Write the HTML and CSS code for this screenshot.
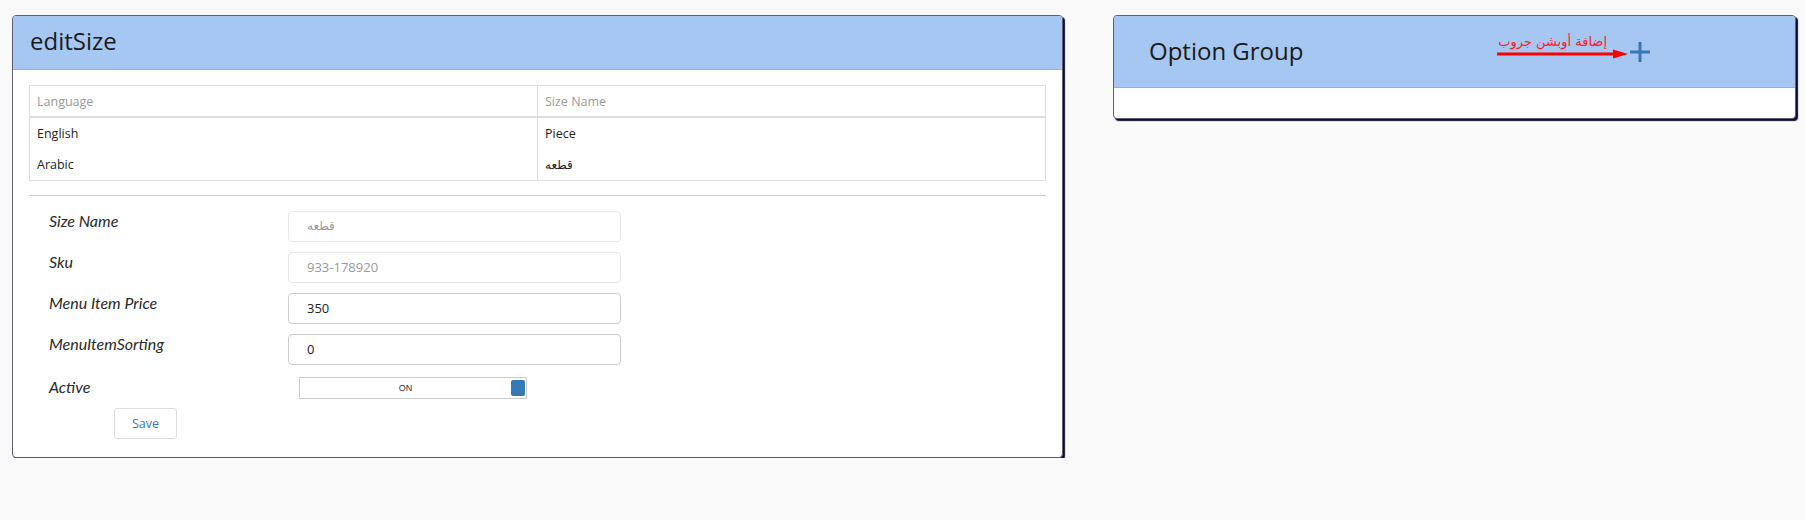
FILE: index.html
```html
<!DOCTYPE html>
<html lang="en">
<head>
<meta charset="utf-8">
<title>editSize</title>
<link rel="stylesheet" href="styles.css">
</head>
<body>
<div class="page">
  <div class="card card-left">
    <div class="card-head head-left"><h2 class="title-left">editSize</h2></div>
    <div class="card-body">
      <table class="lang-table">
        <thead>
          <tr><th class="col-a">Language</th><th class="col-b">Size Name</th></tr>
        </thead>
        <tbody>
          <tr><td class="col-a">English</td><td class="col-b">Piece</td></tr>
          <tr><td class="col-a">Arabic</td><td class="col-b ar">قطعه</td></tr>
        </tbody>
      </table>
      <hr class="divider">
      <div class="form">
        <div class="form-row">
          <label class="lbl">Size Name</label>
          <div class="field disabled ar">قطعه</div>
        </div>
        <div class="form-row">
          <label class="lbl">Sku</label>
          <div class="field disabled">933-178920</div>
        </div>
        <div class="form-row">
          <label class="lbl">Menu Item Price</label>
          <div class="field">350</div>
        </div>
        <div class="form-row">
          <label class="lbl">MenuItemSorting</label>
          <div class="field">0</div>
        </div>
        <div class="form-row row-toggle">
          <label class="lbl">Active</label>
          <div class="toggle"><span class="toggle-text">ON</span><span class="toggle-handle"></span></div>
        </div>
        <div class="actions"><button class="btn-save">Save</button></div>
      </div>
    </div>
  </div>

  <div class="card card-right">
    <div class="card-head head-right">
      <h2 class="title-right">Option Group</h2>
      <div class="add-wrap">
        <div class="annot">
          <span class="annot-text">إضافة أوبشن جروب</span>
          <svg class="annot-arrow" width="131" height="10" viewBox="0 0 131 10"><rect x="0" y="3.5" width="118" height="3" fill="#ff0000"/><polygon points="116,0.5 131,5 116,9.5" fill="#ff0000"/></svg>
        </div>
        <svg class="plus" width="20" height="20" viewBox="0 0 20 20"><rect x="8.5" y="0" width="3" height="20" fill="#337ab7"/><rect x="0" y="8.5" width="20" height="3" fill="#337ab7"/></svg>
      </div>
    </div>
    <div class="card-body-empty"></div>
  </div>
</div>
</body>
</html>
```

FILE: styles.css
```css
html, body {
  margin: 0;
  padding: 0;
  background: #f9f9f9;
  font-family: "Open Sans", "DejaVu Sans", sans-serif;
  color: #333;
}

.page {
  display: flex;
  align-items: flex-start;
  gap: 50px;
  padding: 15px 0 0 12px;
}

.card {
  background: #fff;
  border: 1px solid #5e5e70;
  border-radius: 4px;
  box-shadow: 2px 2px 1px #0b0c33;
  overflow: hidden;
}

.card-left { width: 1049px; }
.card-right { width: 681px; }

.card-head {
  background: #a6c7f2;
  border-bottom: 1px solid #8fb0dc;
  display: flex;
  align-items: center;
}

.head-left {
  height: 54px;
  padding: 0 16px 4px 17px;
  box-sizing: border-box;
}

.head-right {
  height: 72px;
  padding: 0 0 0 35px;
  box-sizing: border-box;
}

.title-left {
  margin: 0;
  font-weight: normal;
  font-size: 24px;
  color: #1a1a1a;
}

.title-right {
  margin: 0 0 3px 0;
  font-weight: normal;
  font-size: 24px;
  color: #1a1a1a;
}

.add-wrap {
  margin-left: auto;
  margin-right: 145px;
  position: relative;
  height: 20px;
}

.plus { display: block; }

.annot {
  position: absolute;
  right: calc(100% + 2px);
  top: -8px;
  width: 131px;
  display: flex;
  flex-direction: column;
}

.annot-text {
  display: block;
  text-align: right;
  margin-right: 21px;
  font-family: "DejaVu Sans", sans-serif;
  font-size: 13px;
  line-height: 15px;
  color: #ff1a1a;
  white-space: nowrap;
}

.annot-arrow { display: block; }

.card-body-empty { height: 30px; }

.card-body {
  padding: 15px 16px 18px 16px;
}

.lang-table {
  width: 100%;
  border-collapse: collapse;
  border: 1px solid #ddd;
  font-size: 12.5px;
}

.lang-table th {
  font-weight: normal;
  color: #999;
  text-align: left;
  height: 30px;
  padding: 0 7px;
  border-bottom: 2px solid #ddd;
}

.lang-table td {
  height: 31px;
  padding: 0 7px;
  color: #222;
}

.col-a { width: 50%; }
.col-b { border-left: 1px solid #ddd; }

.ar { font-family: "DejaVu Sans", sans-serif; font-size: 12px; }

.divider {
  border: 0;
  border-top: 1px solid #ccc;
  margin: 14px 0 0 0;
}

.form {
  padding: 15px 0 0 20px;
}

.form-row {
  display: flex;
  align-items: flex-start;
  margin-bottom: 10px;
}

.lbl {
  width: 239px;
  font-family: "Lato", "Open Sans", sans-serif;
  font-style: italic;
  font-size: 16px;
  line-height: 20px;
  color: #2a2a2a;
}

.field {
  width: 333px;
  height: 31px;
  box-sizing: border-box;
  border: 1px solid #ccc;
  border-radius: 4px;
  padding: 0 18px;
  font-size: 13px;
  line-height: 29px;
  color: #222;
}

.field.disabled {
  border-color: #e8e8e8;
  color: #999;
}

.field.ar { font-size: 12px; }

.row-toggle { margin-top: 12px; margin-bottom: 9px; }

.toggle {
  margin-left: 11px;
  width: 228px;
  height: 22px;
  box-sizing: border-box;
  border: 1px solid #ccc;
  background: #fff;
  display: flex;
  align-items: center;
  position: relative;
}

.toggle-text {
  flex: 1;
  text-align: center;
  font-family: "Liberation Sans", sans-serif;
  font-size: 9px;
  color: #333;
}

.toggle-handle {
  width: 14px;
  height: 16px;
  background: #337ab7;
  border-radius: 2px;
  margin-right: 1px;
}

.actions {
  padding-left: 65px;
}

.btn-save {
  width: 63px;
  height: 31px;
  background: #fff;
  border: 1px solid #ddd;
  border-radius: 3px;
  font-family: "Open Sans", sans-serif;
  font-size: 12.5px;
  color: #337ab7;
  padding: 0;
}
```
